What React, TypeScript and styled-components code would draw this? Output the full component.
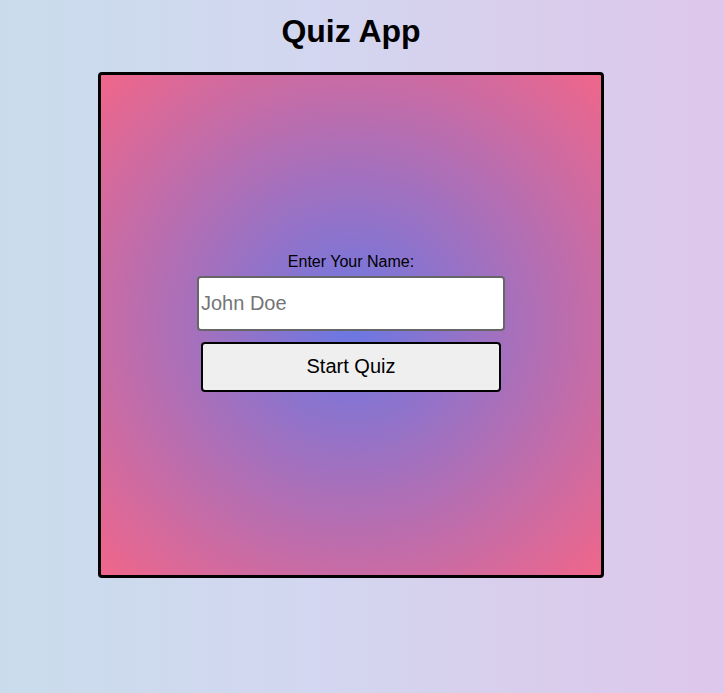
import React, { useState } from "react";
import styled, { createGlobalStyle } from "styled-components";

const GlobalStyle = createGlobalStyle`
  html, body {
    margin: 0;
    padding: 0;
    min-height: 100%;
  }
  body {
    min-height: 693px;
    font-family: "Liberation Sans", Arial, sans-serif;
    background: linear-gradient(to right, #c9dcec 0%, #d3d6f0 45%, #d9cdec 75%, #ddc7eb 100%);
  }
`;

const Page = styled.div`
  width: 702px;
  display: flex;
  flex-direction: column;
  align-items: center;
`;

const Title = styled.h1`
  margin: 13px 0 22px;
  font-size: 32px;
  font-weight: 700;
  color: #000;
  line-height: 37px;
`;

const Card = styled.div`
  box-sizing: border-box;
  width: 506px;
  height: 506px;
  padding-bottom: 6px;
  border: 3px solid #000;
  border-radius: 4px;
  background: radial-gradient(circle farthest-corner, #6a78e4 0%, #f0668a 100%);
  display: flex;
  flex-direction: column;
  align-items: center;
  justify-content: center;
`;

const Label = styled.label`
  font-size: 16px;
  color: #000;
  line-height: 18px;
  margin-bottom: 5px;
`;

const NameInput = styled.input`
  box-sizing: border-box;
  width: 308px;
  height: 55px;
  border: 2px solid #666;
  border-radius: 4px;
  background: #fff;
  padding: 0 2px;
  font-family: "Liberation Sans", Arial, sans-serif;
  font-size: 20px;
  color: #000;
  outline: none;
  &::placeholder {
    color: #757575;
  }
`;

const StartButton = styled.button`
  box-sizing: border-box;
  width: 300px;
  height: 50px;
  margin-top: 11px;
  border: 2px solid #000;
  border-radius: 4px;
  background: #efefef;
  font-family: "Liberation Sans", Arial, sans-serif;
  font-size: 20px;
  color: #000;
  cursor: pointer;
`;

export default function App() {
  const [name, setName] = useState("");
  return (
    <>
      <GlobalStyle />
      <Page>
        <Title>Quiz App</Title>
        <Card>
          <Label htmlFor="name">Enter Your Name:</Label>
          <NameInput
            id="name"
            placeholder="John Doe"
            value={name}
            onChange={(e) => setName(e.target.value)}
          />
          <StartButton>Start Quiz</StartButton>
        </Card>
      </Page>
    </>
  );
}
